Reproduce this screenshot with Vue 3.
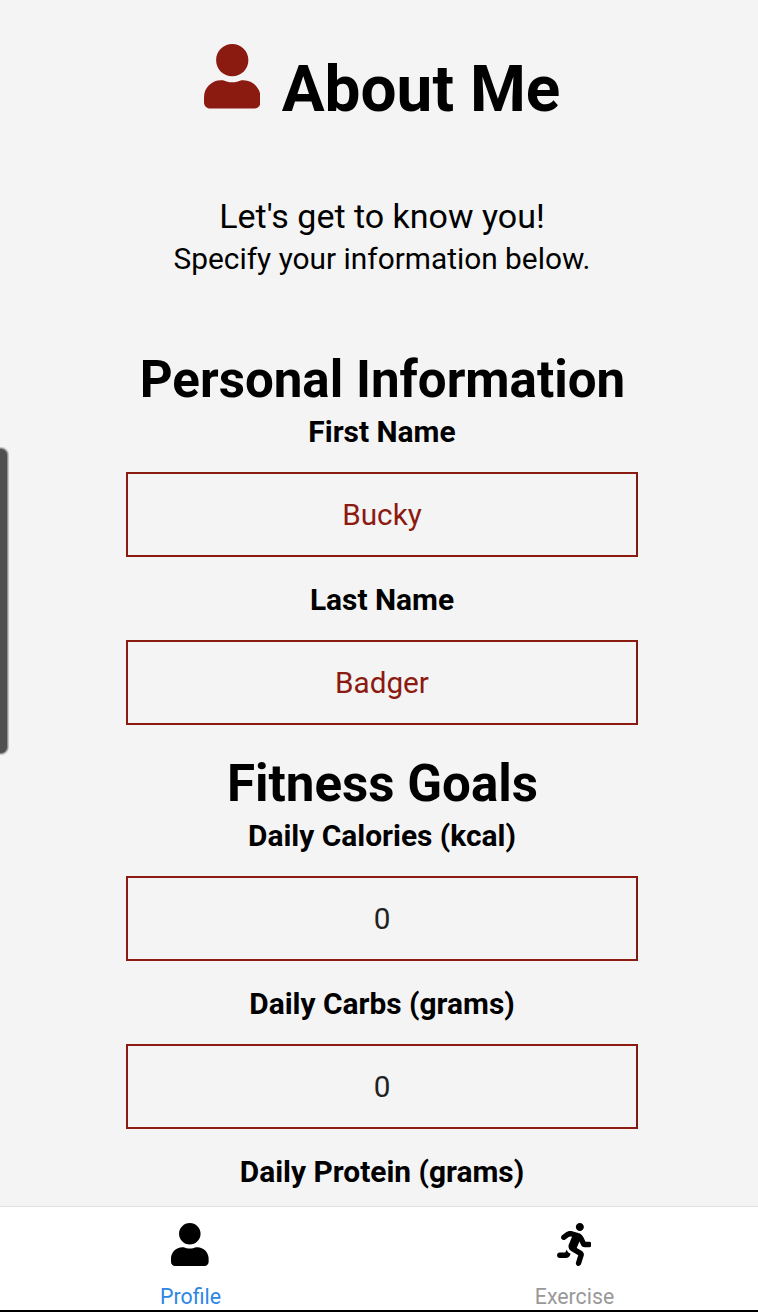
<script setup>
const sections = [
  {
    title: 'Personal Information',
    fields: [
      { label: 'First Name', value: 'Bucky', filled: true },
      { label: 'Last Name', value: 'Badger', filled: true },
    ],
  },
  {
    title: 'Fitness Goals',
    fields: [
      { label: 'Daily Calories (kcal)', value: '0' },
      { label: 'Daily Carbs (grams)', value: '0' },
      { label: 'Daily Protein (grams)', value: '' },
    ],
  },
]
const userPath =
  'M224 256c70.7 0 128-57.3 128-128S294.7 0 224 0 96 57.3 96 128s57.3 128 128 128zm89.6 32h-16.7c-22.2 10.2-46.9 16-72.9 16s-50.6-5.8-72.9-16h-16.7C60.2 288 0 348.2 0 422.4V464c0 26.5 21.5 48 48 48h352c26.5 0 48-21.5 48-48v-41.6c0-74.2-60.2-134.4-134.4-134.4z'
const runPath =
  'M272 96c26.51 0 48-21.49 48-48S298.51 0 272 0s-48 21.49-48 48 21.49 48 48 48zM113.69 317.47l-14.8 34.52H32c-17.67 0-32 14.33-32 32s14.33 32 32 32h77.45c19.25 0 36.58-11.44 44.11-29.09l8.79-20.52-10.67-6.3c-17.32-10.23-30.06-25.37-37.99-42.82zM384 223.99h-44.03l-26.06-53.25c-12.5-25.55-35.45-44.23-61.78-50.94l-71.08-21.14c-28.3-6.8-57.77-.55-80.84 17.14l-39.67 30.41c-14.03 10.75-16.69 30.83-5.94 44.86s30.84 16.69 44.86 5.94l39.69-30.41c7.67-5.89 17.44-8 25.27-6.14l14.7 4.37-37.46 87.39c-12.62 29.48-1.31 64.01 26.3 80.31l84.98 50.17-27.47 87.73c-5.28 16.86 4.11 34.82 20.97 40.09 3.19 1 6.41 1.48 9.58 1.48 13.61 0 26.23-8.77 30.52-22.45l31.64-101.06c5.91-20.77-2.89-43.08-21.64-54.39l-61.24-36.14 31.31-78.28 20.27 41.43c8 16.34 24.92 26.89 43.11 26.89H384c17.67 0 32-14.33 32-32s-14.33-31.99-32-31.99z'
</script>

<template>
  <div class="screen">
    <main class="content">
      <header class="title-row">
        <svg class="title-icon" viewBox="0 0 448 512"><path :d="userPath" /></svg>
        <h1>About Me</h1>
      </header>
      <p class="lead">Let's get to know you!</p>
      <p class="sub">Specify your information below.</p>
      <section v-for="s in sections" :key="s.title" class="section">
        <h2>{{ s.title }}</h2>
        <div v-for="f in s.fields" :key="f.label" class="field">
          <div class="label">{{ f.label }}</div>
          <div class="input" :class="{ filled: f.filled }">{{ f.value }}</div>
        </div>
      </section>
    </main>
    <nav class="tabs">
      <div class="tab active">
        <svg class="tab-icon" viewBox="0 0 448 512"><path :d="userPath" /></svg>
        <span>Profile</span>
      </div>
      <div class="tab">
        <svg class="tab-icon" viewBox="0 0 416 512"><path :d="runPath" /></svg>
        <span>Exercise</span>
      </div>
    </nav>
    <div class="edge-handle"></div>
  </div>
</template>

<style>
body {
  background: #f4f4f4;
}
</style>

<style scoped>
.screen {
  position: relative;
  box-sizing: border-box;
  height: 1312px;
  display: flex;
  flex-direction: column;
  overflow: hidden;
  background: #f4f4f4;
  color: #000;
  font-family: Roboto, "Liberation Sans", sans-serif;
}
.content {
  flex: 1;
  min-height: 0;
  overflow: hidden;
  display: flex;
  flex-direction: column;
  align-items: center;
  padding: 44px 0 0 6px;
}
.content > * {
  flex: none;
}
.title-row {
  display: flex;
  align-items: flex-start;
  height: 150px;
  gap: 21.5px;
}
.title-icon {
  width: 56.5px;
  height: 64.5px;
  fill: #8b1a10;
}
h1 {
  margin: 8px 0 0;
  font-size: 63.9px;
  line-height: 75px;
  font-weight: 700;
  white-space: nowrap;
}
.lead,
.sub {
  margin: 0;
  white-space: nowrap;
}
.lead {
  font-size: 34px;
  line-height: 44px;
}
.sub {
  font-size: 29.85px;
  line-height: 42px;
  margin-bottom: 70px;
}
.section {
  display: flex;
  flex-direction: column;
  align-items: center;
}
h2 {
  margin: 0 0 -1px 1px;
  font-size: 51.1px;
  line-height: 60px;
  font-weight: 700;
  white-space: nowrap;
}
.field {
  height: 168px;
  display: flex;
  flex-direction: column;
  align-items: center;
}
.section .field:last-child {
  height: 177px;
}
.label {
  height: 63px;
  box-sizing: border-box;
  padding-top: 5px;
  font-size: 29.9px;
  line-height: 36px;
  font-weight: 700;
  white-space: nowrap;
}
.input {
  box-sizing: border-box;
  width: 512px;
  height: 85px;
  flex: none;
  border: 2px solid #8b1a10;
  border-right-color: #7b1b12;
  text-align: center;
  font-size: 29.7px;
  line-height: 82px;
  color: #222;
}
.input.filled {
  color: #8b1a10;
}
.tabs {
  flex: none;
  box-sizing: border-box;
  height: 106px;
  display: flex;
  background: #fff;
  border-top: 1px solid #e0e0e0;
  border-bottom: 2px solid #000;
}
.tab {
  width: 380px;
  margin-right: 4px;
  flex: none;
  display: flex;
  flex-direction: column;
  align-items: center;
  padding-top: 16px;
  color: #999;
  font-size: 21.3px;
  line-height: 28px;
}
.tab.active {
  color: #2d86e5;
}
.tab span {
  margin-left: 1px;
}
.tab-icon {
  flex: none;
  height: 43px;
  margin-bottom: 17px;
  fill: #000;
}
.edge-handle {
  position: absolute;
  left: -12px;
  top: 448px;
  width: 18px;
  height: 304px;
  border-radius: 7px;
  background: #505050;
  border: 1px solid #909090;
  box-shadow: 0 0 0 1px #c4c4c4;
}
</style>
